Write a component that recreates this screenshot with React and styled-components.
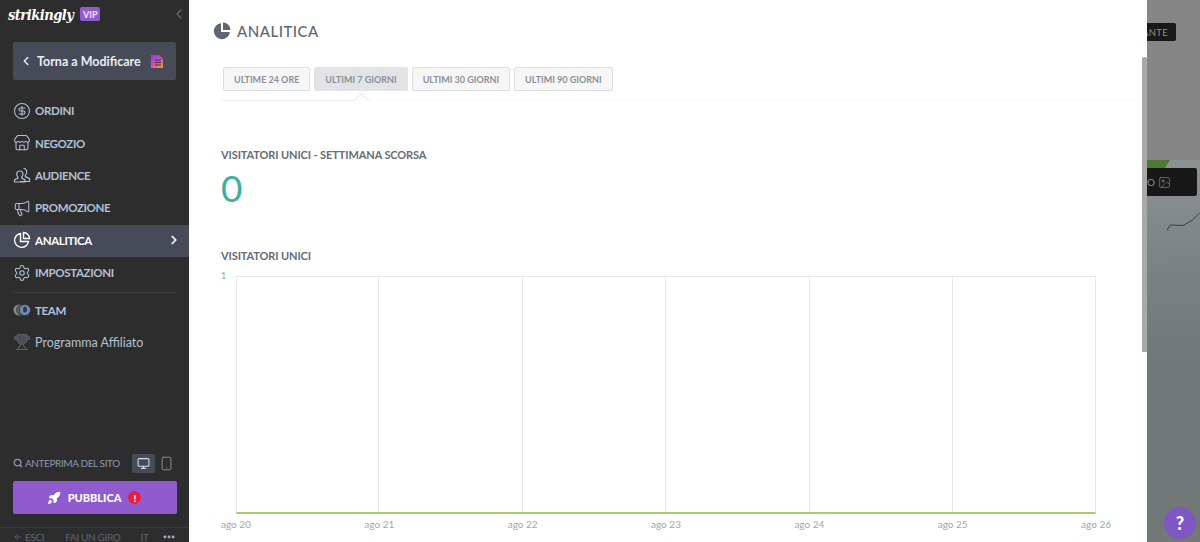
import React from "react";
import styled, { createGlobalStyle } from "styled-components";
import {
  ChevronLeft, ChevronRight, CircleDollarSign, Store, Megaphone, Settings, Trophy,
  Search, Monitor, Smartphone, Rocket, ArrowLeft, MoreHorizontal, Image as ImageIcon,
} from "lucide-react";

const Global = createGlobalStyle`
  html, body { margin: 0; padding: 0; width: 1200px; height: 542px; overflow: hidden; background: #fff; }
  * { box-sizing: border-box; }
  body { font-family: Lato, "Liberation Sans", sans-serif; }
`;

const Page = styled.div`
  display: grid;
  grid-template-columns: 189px 958px 53px;
  width: 1200px;
  height: 542px;
  overflow: hidden;
`;

const Sidebar = styled.aside`
  background: #2d2d2d;
  height: 542px;
  display: flex;
  flex-direction: column;
  overflow: hidden;
`;

const Brand = styled.div`
  height: 42px;
  padding: 0 2px 14px 8px;
  display: flex;
  align-items: center;
  color: #fff;
`;
const Logo = styled.span`
  font-family: "DejaVu Serif Condensed", "DejaVu Serif", serif;
  font-style: italic;
  font-weight: 700;
  font-size: 14.5px;
  letter-spacing: -0.5px;
`;
const Vip = styled.span`
  margin-left: 7px;
  width: 20px;
  height: 14px;
  background: #8f5bcf;
  border-radius: 2px;
  color: #e8dcf7;
  font-size: 9px;
  font-weight: 900;
  display: flex;
  align-items: center;
  justify-content: center;
`;
const Collapse = styled.span`
  margin-left: auto;
  color: #5d6675;
  display: flex;
`;

const BackButton = styled.div`
  margin: 0 13px;
  height: 38px;
  background: #464b57;
  border-radius: 2px;
  display: flex;
  align-items: center;
  padding-left: 6px;
  color: #e9edf3;
  font-size: 12.5px;
  font-weight: 700;
`;
const BackLabel = styled.span`
  margin-left: 4px;
  margin-right: 10px;
  white-space: nowrap;
`;

const Nav = styled.nav`
  margin-top: 15px;
  display: flex;
  flex-direction: column;
`;
const NavRow = styled.div`
  height: 32.4px;
  padding: 0 13px 1px;
  display: flex;
  align-items: center;
  gap: 4px;
  font-size: 11.5px;
  letter-spacing: -0.35px;
  font-weight: 700;
  color: ${(p) => (p.$active ? "#fff" : "#b4c0d6")};
  background: ${(p) => (p.$active ? "#464b57" : "transparent")};
  svg { flex: none; }
`;
const PlainLabel = styled.span`
  font-weight: 400;
  font-size: 12.5px;
  letter-spacing: 0;
`;
const RowChevron = styled.span`
  margin-left: auto;
  margin-right: -5px;
  display: flex;
`;
const Divider = styled.div`
  height: 1px;
  background: #3c3c3c;
  margin: 3px 13px 1px;
`;

const Bottom = styled.div`
  margin-top: auto;
`;
const PreviewRow = styled.div`
  display: flex;
  align-items: center;
  padding: 0 12px 0 13px;
  height: 22px;
  color: #8d97a8;
  font-size: 10px;
  letter-spacing: -0.4px;
  white-space: nowrap;
`;
const PreviewLabel = styled.span`
  margin-left: 2px;
`;
const DeviceButton = styled.span`
  width: ${(p) => (p.$active ? "23px" : "22px")};
  height: 19px;
  border-radius: 2px;
  display: flex;
  align-items: center;
  justify-content: center;
  background: ${(p) => (p.$active ? "#464b57" : "transparent")};
  color: ${(p) => (p.$active ? "#d5dae3" : "#8d97a8")};
  margin-left: ${(p) => (p.$active ? "auto" : "0")};
`;
const Publish = styled.div`
  margin: 7px 12px 0 13px;
  height: 33px;
  background: #8f5bcf;
  border-radius: 2px;
  display: flex;
  align-items: center;
  justify-content: center;
  gap: 7px;
  padding-right: 2px;
  color: #fff;
  font-size: 11px;
  font-weight: 900;
`;
const Alert = styled.span`
  width: 13px;
  height: 13px;
  border-radius: 50%;
  background: #ee1c3a;
  color: #fff;
  font-size: 10px;
  font-weight: 900;
  display: flex;
  align-items: center;
  justify-content: center;
`;
const Footer = styled.div`
  margin-top: 13px;
  border-top: 1px solid #3a3a3a;
  height: 15px;
  padding: 3px 13px 0 13px;
  display: flex;
  align-items: center;
  color: #5e6674;
  font-size: 10px;
  letter-spacing: -0.35px;
  white-space: nowrap;
`;
const FooterItem = styled.span`
  display: flex;
  align-items: center;
  margin-left: ${(p) => (p.$gap ? `${p.$gap}px` : "0")};
  gap: 2px;
`;
const FooterMore = styled.span`
  display: flex;
  margin-left: auto;
`;

const Panel = styled.main`
  background: #fff;
  height: 542px;
  padding: 19px 0 0 24px;
  position: relative;
  overflow: hidden;
  color: #5e6570;
`;
const Scrollbar = styled.div`
  position: absolute;
  top: 57px;
  right: 0;
  width: 5px;
  height: 295px;
  background: #a9a9a9;
  border-radius: 2px 2px 0 0;
`;
const Title = styled.h1`
  margin: 0;
  height: 24px;
  display: flex;
  align-items: center;
  gap: 6px;
  font-size: 15px;
  font-weight: 500;
  color: #606670;
  letter-spacing: 0.5px;
`;
const Tabs = styled.div`
  margin: 24px 0 0 10px;
  display: flex;
  gap: 4px;
`;
const Tab = styled.div`
  height: 24px;
  padding: 0 10px;
  border-radius: 2px;
  display: flex;
  align-items: center;
  font-size: 9px;
  font-weight: 700;
  color: #8a9099;
  white-space: nowrap;
  background: ${(p) => (p.$active ? "#e2e3e6" : "#f6f6f6")};
  border: 1px solid ${(p) => (p.$active ? "#e2e3e6" : "#dcdde0")};
`;
const TabRule = styled.div`
  position: relative;
  margin: 9px 0 0 8px;
  height: 1px;
  background: linear-gradient(to right, #eee 0, #eee 140px, #fafafa 141px);
  &::after {
    content: "";
    position: absolute;
    left: 135px;
    top: -5px;
    width: 10px;
    height: 10px;
    background: #fff;
    border-left: 1px solid #e6e6e6;
    border-top: 1px solid #e6e6e6;
    transform: rotate(45deg);
  }
`;
const StatLabel = styled.div`
  margin: 47px 0 0 8px;
  font-size: 11px;
  font-weight: 700;
  letter-spacing: -0.1px;
  color: #666c75;
  line-height: 14px;
`;
const StatValue = styled.div`
  margin: 2px 0 0 8px;
  font-size: 37px;
  font-weight: 400;
  line-height: 48px;
  color: #3fae9e;
`;
const ChartLabel = styled.div`
  margin: 37px 0 0 8px;
  font-size: 11px;
  font-weight: 700;
  letter-spacing: -0.1px;
  line-height: 14px;
  color: #666c75;
`;
const Chart = styled.div`
  position: relative;
  margin: 13px 0 0 23px;
  width: 860px;
  height: 238px;
  display: grid;
  grid-template-columns: 141px 144px 143px 144px 143px 1fr;
  border: 1px solid #e8e8e8;
  border-bottom: 2px solid #a5cb74;
`;
const ChartCell = styled.div`
  border-left: ${(p) => (p.$first ? "none" : "1px solid #e8e8e8")};
`;
const YTick = styled.span`
  position: absolute;
  left: -16px;
  top: -7px;
  font-size: 9px;
  color: #9a9fa6;
`;
const XAxis = styled.div`
  margin: 4px 0 0 8px;
  width: 890px;
  display: flex;
  justify-content: space-between;
  font-size: 10px;
  color: #a1a5ab;
`;

const Backdrop = styled.div`
  position: relative;
  height: 542px;
  overflow: hidden;
  display: flex;
  flex-direction: column;
`;
const BackdropTop = styled.div`
  height: 160px;
  background: #868686;
`;
const BackdropImage = styled.div`
  flex: 1;
  background: linear-gradient(to bottom, #8d9393 0, #7b8181 110px, #727878 200px);
`;
const Chip = styled.div`
  position: absolute;
  left: 0;
  background: #181818;
  color: #8f8f8f;
  border-radius: 0 2px 2px 0;
  display: flex;
  align-items: center;
  overflow: hidden;
`;
const ChipTop = styled(Chip)`
  top: 23px;
  width: 29px;
  height: 18px;
  font-size: 9.5px;
  padding-right: 8px;
  justify-content: flex-end;
  letter-spacing: 0.3px;
`;
const ChipBottom = styled(Chip)`
  top: 168px;
  width: 50px;
  height: 28px;
  font-size: 10px;
  gap: 3px;
`;
const Help = styled.div`
  position: absolute;
  left: 17px;
  bottom: 3px;
  width: 32px;
  height: 32px;
  border-radius: 50%;
  background: #7e57c2;
  color: #fff;
  font-weight: 900;
  font-size: 18px;
  display: flex;
  align-items: center;
  justify-content: center;
`;
const BackdropArt = styled.svg`
  position: absolute;
  left: 0;
  top: 160px;
`;

const PieIcon = ({ size = 18 }) => (
  <svg width={size} height={size} viewBox="0 0 18 18" fill="#5f6670">
    <path d="M8 1.2a8 8 0 1 0 8.8 8.8H8z" />
    <path d="M10 0.5V8h7.5A7.6 7.6 0 0 0 10 0.5z" />
    <path d="M10.5 11h6.2a8 8 0 0 1-2.5 4z" />
  </svg>
);
const OutlinePie = () => (
  <svg width="18" height="18" viewBox="0 0 18 18" fill="none" stroke="#fff" strokeWidth="1.4">
    <path d="M7.5 2.5a7 7 0 1 0 8 8H7.5z" />
    <path d="M10.5 1.5v6h6a6 6 0 0 0-6-6z" />
  </svg>
);
const AudienceIcon = () => (
  <svg width="18" height="18" viewBox="0 0 18 18" fill="none" stroke="currentColor" strokeWidth="1.2" strokeLinejoin="round">
    <path d="M10.5 2.5c2.2 0 3.4 1.6 3.2 3.7-.1 1.3-.6 2.5-1.4 3.1v1.3l4.2 2v2.9H7" />
    <path d="M7 5c1.9 0 3 1.4 2.9 3.2-.1 1.1-.5 2.2-1.2 2.7v1.2l3.3 1.7v2.2H1.5v-2.2l3.4-1.7v-1.2c-.7-.5-1.2-1.6-1.2-2.7C3.5 6.4 5 5 7 5z" />
  </svg>
);
const DocIcon = () => (
  <svg width="12" height="13" viewBox="0 0 12 13">
    <defs>
      <linearGradient id="docGrad" x1="0" y1="0" x2="0.6" y2="1">
        <stop offset="0" stopColor="#8a3fe0" />
        <stop offset="0.6" stopColor="#c94fb0" />
        <stop offset="1" stopColor="#f08a3c" />
      </linearGradient>
    </defs>
    <path d="M0 0h8l4 4v9H0z" fill="url(#docGrad)" />
    <path d="M4 5h6M4 7.5h6M4 10h6" stroke="#3c3560" strokeWidth="1" />
  </svg>
);
const TeamIcon = () => (
  <svg width="18" height="14" viewBox="0 0 18 14">
    <circle cx="6" cy="7" r="5.5" fill="#8a8a8a" />
    <circle cx="9" cy="7" r="5.5" fill="#5f5a52" stroke="#2d2d2d" strokeWidth="0.6" />
    <circle cx="12" cy="7" r="5.5" fill="#6d8bb2" stroke="#2d2d2d" strokeWidth="0.6" />
    <ellipse cx="12" cy="6.5" rx="2" ry="3" fill="#2f3a4c" />
  </svg>
);

const items = [
  ["ORDINI", <CircleDollarSign key="o" size={18} strokeWidth={1.4} />],
  ["NEGOZIO", <Store key="n" size={18} strokeWidth={1.4} />],
  ["AUDIENCE", <AudienceIcon key="a" />],
  ["PROMOZIONE", <Megaphone key="p" size={18} strokeWidth={1.4} />],
];
const days = ["ago 20", "ago 21", "ago 22", "ago 23", "ago 24", "ago 25", "ago 26"];

export default function App() {
  return (
    <>
      <Global />
      <Page>
        <Sidebar>
          <Brand>
            <Logo>strikingly</Logo>
            <Vip>VIP</Vip>
            <Collapse><ChevronLeft size={16} strokeWidth={2} /></Collapse>
          </Brand>
          <BackButton>
            <ChevronLeft size={14} strokeWidth={2.5} />
            <BackLabel>Torna a Modificare</BackLabel>
            <DocIcon />
          </BackButton>
          <Nav>
            {items.map(([label, icon]) => (
              <NavRow key={label}>
                {icon}
                {label}
              </NavRow>
            ))}
            <NavRow $active>
              <OutlinePie />
              ANALITICA
              <RowChevron><ChevronRight size={14} strokeWidth={3} /></RowChevron>
            </NavRow>
            <NavRow>
              <Settings size={18} strokeWidth={1.4} />
              IMPOSTAZIONI
            </NavRow>
            <Divider />
            <NavRow>
              <TeamIcon />
              TEAM
            </NavRow>
            <NavRow>
              <Trophy size={18} strokeWidth={1.4} color="#5c6068" fill="#4c4f55" />
              <PlainLabel>Programma Affiliato</PlainLabel>
            </NavRow>
          </Nav>
          <Bottom>
            <PreviewRow>
              <Search size={10} strokeWidth={3} />
              <PreviewLabel>ANTEPRIMA DEL SITO</PreviewLabel>
              <DeviceButton $active><Monitor size={13} strokeWidth={2} /></DeviceButton>
              <DeviceButton><Smartphone size={15} strokeWidth={1.5} /></DeviceButton>
            </PreviewRow>
            <Publish>
              <Rocket size={14} fill="#fff" strokeWidth={1.5} />
              PUBBLICA
              <Alert>!</Alert>
            </Publish>
            <Footer>
              <FooterItem><ArrowLeft size={10} strokeWidth={2} />ESCI</FooterItem>
              <FooterItem $gap={21}>FAI UN GIRO</FooterItem>
              <FooterItem $gap={20}>IT</FooterItem>
              <FooterMore><MoreHorizontal size={14} strokeWidth={3} color="#a8b2c4" /></FooterMore>
            </Footer>
          </Bottom>
        </Sidebar>

        <Panel>
          <Title><PieIcon />ANALITICA</Title>
          <Tabs>
            <Tab>ULTIME 24 ORE</Tab>
            <Tab $active>ULTIMI 7 GIORNI</Tab>
            <Tab>ULTIMI 30 GIORNI</Tab>
            <Tab>ULTIMI 90 GIORNI</Tab>
          </Tabs>
          <TabRule />
          <StatLabel>VISITATORI UNICI - SETTIMANA SCORSA</StatLabel>
          <StatValue>0</StatValue>
          <ChartLabel>VISITATORI UNICI</ChartLabel>
          <Chart>
            <YTick>1</YTick>
            {[0, 1, 2, 3, 4, 5].map((i) => <ChartCell key={i} $first={i === 0} />)}
          </Chart>
          <XAxis>{days.map((d) => <span key={d}>{d}</span>)}</XAxis>
          <Scrollbar />
        </Panel>

        <Backdrop>
          <BackdropTop />
          <BackdropImage />
          <BackdropArt width="53" height="120" viewBox="0 0 53 120">
            <path d="M0 0h23l-5 8H0z" fill="#4c7a35" />
            <path d="M20 70l3-5 13 .5 9-5 8-8" fill="none" stroke="#3c4040" strokeWidth="1" />
            <path d="M0 76h13v24H0" fill="none" stroke="#8c9292" strokeWidth="0.6" strokeDasharray="2 2" />
          </BackdropArt>
          <ChipTop>ANTE</ChipTop>
          <ChipBottom>O <ImageIcon size={13} strokeWidth={1.2} /></ChipBottom>
          <Help>?</Help>
        </Backdrop>
      </Page>
    </>
  );
}
